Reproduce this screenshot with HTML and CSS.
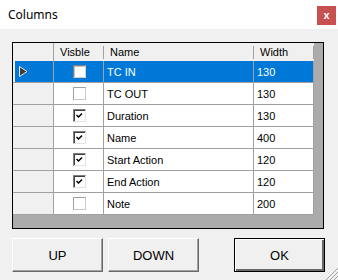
FILE: index.html
```html
<!DOCTYPE html>
<html lang="en">
<head>
    <meta charset="UTF-8">
    <title>Columns</title>
    <link rel="stylesheet" href="styles.css">
</head>
<body>
<div class="window">
    <div class="titlebar">
        <span class="title">Columns</span>
        <span class="close">x</span>
    </div>
    <div class="grid">
        <div class="row head">
            <div class="c rh"></div>
            <div class="c vis">Visble</div>
            <div class="c name">Name</div>
            <div class="c width">Width</div>
        </div>
        <div class="row sel">
            <div class="c rh"><svg class="arrow" width="9" height="11" viewBox="0 0 9 11"><polygon points="0.5,0.5 8,5.5 0.5,10.5" fill="#3c3c3c" stroke="#e8e8e8" stroke-width="1"/></svg></div>
            <div class="c vis"><span class="cb"></span></div>
            <div class="c name">TC IN</div>
            <div class="c width">130</div>
        </div>
        <div class="row">
            <div class="c rh"></div>
            <div class="c vis"><span class="cb"></span></div>
            <div class="c name">TC OUT</div>
            <div class="c width">130</div>
        </div>
        <div class="row">
            <div class="c rh"></div>
            <div class="c vis"><span class="cb on"><svg width="11" height="11" viewBox="0 0 11 11"><polyline points="2.5,5 4.5,7 8,3.5" fill="none" stroke="#000" stroke-width="1.5"/></svg></span></div>
            <div class="c name">Duration</div>
            <div class="c width">130</div>
        </div>
        <div class="row">
            <div class="c rh"></div>
            <div class="c vis"><span class="cb on"><svg width="11" height="11" viewBox="0 0 11 11"><polyline points="2.5,5 4.5,7 8,3.5" fill="none" stroke="#000" stroke-width="1.5"/></svg></span></div>
            <div class="c name">Name</div>
            <div class="c width">400</div>
        </div>
        <div class="row">
            <div class="c rh"></div>
            <div class="c vis"><span class="cb on"><svg width="11" height="11" viewBox="0 0 11 11"><polyline points="2.5,5 4.5,7 8,3.5" fill="none" stroke="#000" stroke-width="1.5"/></svg></span></div>
            <div class="c name">Start Action</div>
            <div class="c width">120</div>
        </div>
        <div class="row">
            <div class="c rh"></div>
            <div class="c vis"><span class="cb on"><svg width="11" height="11" viewBox="0 0 11 11"><polyline points="2.5,5 4.5,7 8,3.5" fill="none" stroke="#000" stroke-width="1.5"/></svg></span></div>
            <div class="c name">End Action</div>
            <div class="c width">120</div>
        </div>
        <div class="row">
            <div class="c rh"></div>
            <div class="c vis"><span class="cb"></span></div>
            <div class="c name">Note</div>
            <div class="c width">200</div>
        </div>
    </div>
    <div class="buttons">
        <button class="btn">UP</button>
        <button class="btn">DOWN</button>
        <button class="btn ok">OK</button>
    </div>
    <svg class="grip" width="13" height="14" viewBox="0 0 13 14">
        <line x1="13" y1="2" x2="1" y2="14" stroke="#a0a0a0"/>
        <line x1="13" y1="6" x2="5" y2="14" stroke="#a0a0a0"/>
        <line x1="13" y1="10" x2="9" y2="14" stroke="#a0a0a0"/>
    </svg>
</div>
</body>
</html>
```
FILE: styles.css
```css
*{
    padding: 0;
    margin: 0;
    box-sizing: border-box;
}
body{
    background: #f0f0f0;
    font-family: "Liberation Sans", Arial, sans-serif;
}
.window{
    position: relative;
    width: 338px;
    height: 280px;
    background: #f0f0f0;
    overflow: hidden;
}
.titlebar{
    height: 29px;
    background: white;
    display: flex;
    align-items: center;
    justify-content: space-between;
    padding-left: 8px;
    padding-right: 2px;
}
.title{
    font-family: "Noto Sans", sans-serif;
    font-size: 12px;
    color: #000;
    margin-top: -1px;
}
.close{
    width: 19px;
    height: 19px;
    background: #c75050;
    color: white;
    font-weight: bold;
    font-size: 11px;
    display: flex;
    align-items: center;
    justify-content: center;
    line-height: 1;
    margin-top: 2px;
}
.grid{
    margin: 13px 0 0 12px;
    width: 312px;
    height: 187px;
    border: 1px solid #000;
    background: #ababab;
}
.row{
    display: flex;
    width: 301px;
    height: 22px;
    background: white;
    font-size: 11px;
    color: #000;
}
.c{
    border-right: 1px solid #a0a0a0;
    border-bottom: 1px solid #a0a0a0;
    display: flex;
    align-items: center;
    padding-left: 3px;
    white-space: nowrap;
}
.rh{
    width: 41px;
    background: #f0f0f0;
    padding-left: 0;
}
.vis{
    width: 50px;
    justify-content: center;
    padding-left: 1px;
}
.name{
    width: 150px;
}
.width{
    width: 60px;
}
.head{
    height: 18px;
    background: #f0f0f0;
}
.head .c{
    border-bottom: none;
    padding-left: 6px;
    position: relative;
    border-right-color: transparent;
}
.head .c::after{
    content: "";
    position: absolute;
    right: -1px;
    top: 3px;
    bottom: 2px;
    border-right: 1px solid #a0a0a0;
}
.head .rh{
    border-right-color: #a0a0a0;
}
.head .rh::after{
    display: none;
}
.head .vis{
    justify-content: flex-start;
}
.sel .c{
    background: #0078d7;
    color: white;
}
.sel .rh{
    box-shadow: inset 2px 0 #f0f0f0;
    padding-left: 6px;
}
.cb{
    width: 13px;
    height: 13px;
    background: white;
    border: 1px solid;
    border-color: #a0a0a0 #c8c8c8 #c8c8c8 #a0a0a0;
    display: flex;
    align-items: center;
    justify-content: center;
}
.cb.on{
    border-color: #808080 #e3e3e3 #e3e3e3 #808080;
    box-shadow: inset 1px 1px #404040;
}
.sel .cb{
    border-color: #808080 #d0d0d0 #d0d0d0 #808080;
    box-shadow: inset 1px 1px #c0c0c0;
}
.buttons{
    display: flex;
    margin: 9px 0 0 12px;
}
.btn{
    width: 91px;
    height: 34px;
    background: #f0f0f0;
    border: 1px solid;
    border-color: #fff #696969 #696969 #fff;
    box-shadow: inset -1px -1px #a0a0a0;
    font-family: "Liberation Sans", Arial, sans-serif;
    font-size: 13px;
    color: #000;
    margin-right: 5px;
}
.ok{
    margin-left: 30px;
    border: 1px solid #000;
    box-shadow: inset 1px 1px #fff, inset -2px -2px #696969;
}
.grip{
    position: absolute;
    right: 0;
    bottom: 0;
}
```
